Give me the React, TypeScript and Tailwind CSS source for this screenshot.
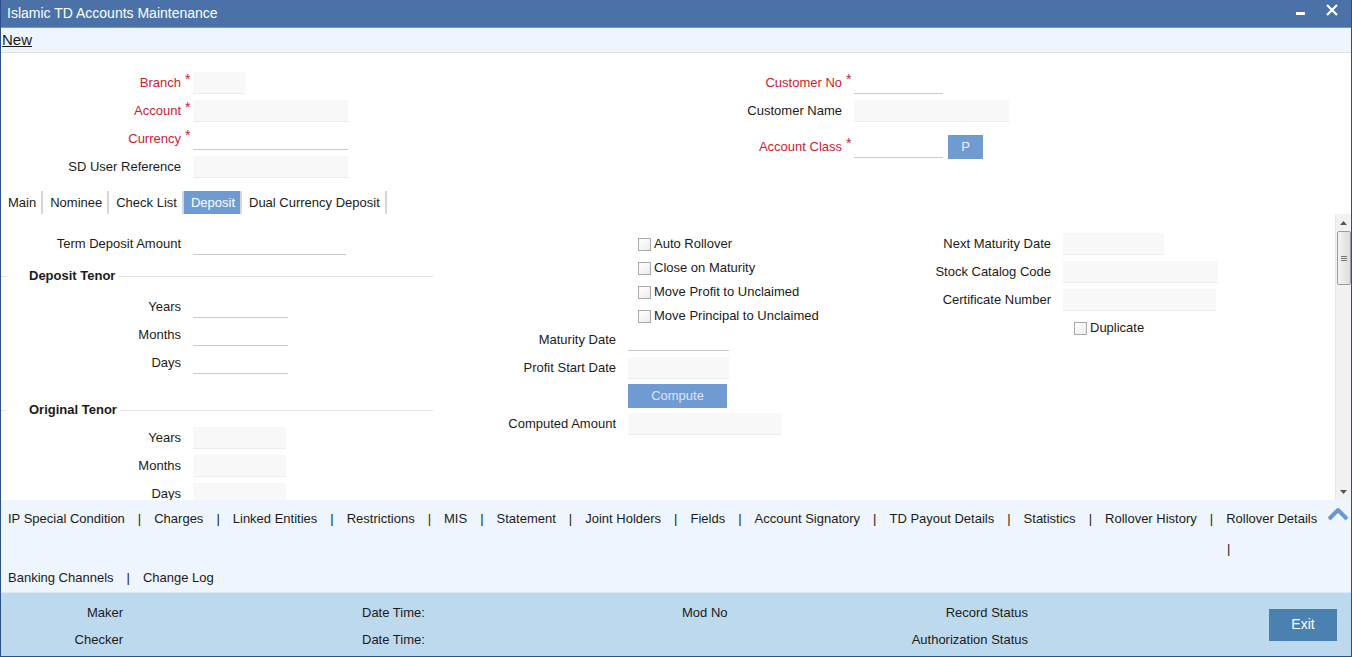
import React from 'react';

const font = { fontFamily: '"Liberation Sans", Arial, sans-serif' };

type Kind = 'fill' | 'line';

const Box: React.FC<{ w: string; kind: Kind }> = ({ w, kind }) => (
  <div
    className={`${w} h-[22px] ${
      kind === 'fill' ? 'bg-[#f8f8f8] border-b border-[#ececec]' : 'bg-white border-b border-[#c9c9c9]'
    }`}
  />
);

const Req = () => <span className="text-[#cc1a30] text-[14px] relative -top-[4px] pl-[4px]">*</span>;

const Check: React.FC<{ label: string }> = ({ label }) => (
  <>
    <span className="w-[13px] h-[13px] border border-[#a9a9a9] bg-gradient-to-br from-white to-[#ececec] shrink-0" />
    <span className="ml-[3px]">{label}</span>
  </>
);

const Legend: React.FC<{ title: string; mt: string }> = ({ title, mt }) => (
  <div className={`flex items-center h-[24px] w-[432px] ${mt}`}>
    <div className="w-[5px] h-px bg-[#e2e2e2]" />
    <span className="ml-[23px] font-bold">{title}</span>
    <div className="flex-1 h-px bg-[#e2e2e2] ml-[3px]" />
  </div>
);

const Row: React.FC<{ label: string; labelW: string; box: React.ReactNode; red?: boolean; req?: boolean }> = ({ label, labelW, box, red, req }) => (
  <div className="flex items-center h-[28px]">
    <div className={`${labelW} text-right shrink-0 ${red ? 'text-[#cc1a30]' : ''}`}>{label}</div>
    <div className="w-[12px] shrink-0 self-stretch flex items-center">{req && <Req />}</div>
    {box}
  </div>
);

const links = [
  'IP Special Condition', 'Charges', 'Linked Entities', 'Restrictions', 'MIS', 'Statement', 'Joint Holders',
  'Fields', 'Account Signatory', 'TD Payout Details', 'Statistics', 'Rollover History', 'Rollover Details',
];

const App: React.FC = () => {
  const tabs = ['Main', 'Nominee', 'Check List', 'Deposit', 'Dual Currency Deposit'];

  return (
    <div style={font} className="w-[1352px] h-[657px] flex flex-col text-[13px] text-[#1b1b1b] border-x border-b border-[#2b4f88] overflow-hidden bg-white">
      {/* Title bar */}
      <div className="h-[28px] shrink-0 bg-[#4a72a8] border-b border-[#7f98b8] flex items-center justify-between pl-[6px] pr-[13px] text-white">
        <span className="text-[14px]">Islamic TD Accounts Maintenance</span>
        <div className="flex items-start h-full pt-[4px]">
          <div className="w-[9px] h-[3px] bg-white mt-[8px]" />
          <svg width="12" height="12" viewBox="0 0 12 12" className="ml-[21px]">
            <path d="M1 1 L11 11 M11 1 L1 11" stroke="white" strokeWidth="2.2" />
          </svg>
        </div>
      </div>

      {/* Toolbar */}
      <div className="h-[25px] shrink-0 bg-[#eef5fd] border-b border-[#dde2e8] flex items-center pl-[1px]">
        <span className="text-[15px] underline">New</span>
      </div>

      {/* Header */}
      <div className="h-[137px] shrink-0 flex">
        <div className="w-[599px] pt-[16px]">
          <Row label="Branch" labelW="w-[180px]" red req box={<Box w="w-[52px]" kind="fill" />} />
          <Row label="Account" labelW="w-[180px]" red req box={<Box w="w-[155px]" kind="fill" />} />
          <Row label="Currency" labelW="w-[180px]" red req box={<Box w="w-[155px]" kind="line" />} />
          <Row label="SD User Reference" labelW="w-[180px]" box={<Box w="w-[155px]" kind="fill" />} />
        </div>
        <div className="pt-[16px]">
          <Row label="Customer No" labelW="w-[242px]" red req box={<Box w="w-[89px]" kind="line" />} />
          <Row label="Customer Name" labelW="w-[242px]" box={<Box w="w-[155px]" kind="fill" />} />
          <div className="mt-[8px]">
            <Row
              label="Account Class"
              labelW="w-[242px]"
              red
              req
              box={
                <>
                  <Box w="w-[89px]" kind="line" />
                  <button className="ml-[5px] w-[35px] h-[24px] bg-[#6f9ad2] text-[#eaf1fb] text-[13px]">P</button>
                </>
              }
            />
          </div>
        </div>
      </div>

      {/* Tabs */}
      <div className="h-[24px] shrink-0 flex pt-[1px]">
        {tabs.map((t) => (
          <div
            key={t}
            className={`h-full flex items-center pl-[7px] pr-[5px] border-r-2 border-[#d6d6d6] ${
              t === 'Deposit' ? 'bg-[#6f9bd3] text-white' : ''
            }`}
          >
            {t}
          </div>
        ))}
      </div>

      {/* Content */}
      <div className="h-[286px] shrink-0 flex">
        <div className="flex-1 flex overflow-hidden">
          {/* Left column */}
          <div className="w-[439px] shrink-0 pt-[16px]">
            <Row label="Term Deposit Amount" labelW="w-[180px]" box={<Box w="w-[153px]" kind="line" />} />
            <Legend title="Deposit Tenor" mt="mt-[6px]" />
            <div className="mt-[5px]">
              <Row label="Years" labelW="w-[180px]" box={<Box w="w-[95px]" kind="line" />} />
              <Row label="Months" labelW="w-[180px]" box={<Box w="w-[95px]" kind="line" />} />
              <Row label="Days" labelW="w-[180px]" box={<Box w="w-[95px]" kind="line" />} />
            </div>
            <Legend title="Original Tenor" mt="mt-[21px]" />
            <div className="mt-[2px]">
              <Row label="Years" labelW="w-[180px]" box={<Box w="w-[93px]" kind="fill" />} />
              <Row label="Months" labelW="w-[180px]" box={<Box w="w-[93px]" kind="fill" />} />
              <Row label="Days" labelW="w-[180px]" box={<Box w="w-[93px]" kind="fill" />} />
            </div>
          </div>

          {/* Middle column */}
          <div className="w-[420px] shrink-0 pt-[18px]">
            {['Auto Rollover', 'Close on Maturity', 'Move Profit to Unclaimed', 'Move Principal to Unclaimed'].map((c) => (
              <div key={c} className="h-[24px] flex items-center pl-[198px]">
                <Check label={c} />
              </div>
            ))}
            <div className="-mt-[2px]">
              <Row label="Maturity Date" labelW="w-[176px]" box={<Box w="w-[101px]" kind="line" />} />
              <Row label="Profit Start Date" labelW="w-[176px]" box={<Box w="w-[101px]" kind="fill" />} />
              <div className="h-[28px] flex items-center pl-[188px]">
                <button className="w-[99px] h-[24px] bg-[#6f9ad2] text-[#dce6f4] text-[13px]">Compute</button>
              </div>
              <Row label="Computed Amount" labelW="w-[176px]" box={<Box w="w-[153px]" kind="fill" />} />
            </div>
          </div>

          {/* Right column */}
          <div className="flex-1 pt-[16px]">
            <Row label="Next Maturity Date" labelW="w-[191px]" box={<Box w="w-[101px]" kind="fill" />} />
            <Row label="Stock Catalog Code" labelW="w-[191px]" box={<Box w="w-[155px]" kind="fill" />} />
            <Row label="Certificate Number" labelW="w-[191px]" box={<Box w="w-[153px]" kind="fill" />} />
            <div className="h-[28px] flex items-center pl-[214px]">
              <Check label="Duplicate" />
            </div>
          </div>
        </div>

        {/* Scrollbar */}
        <div className="w-[16px] shrink-0 bg-[#f1f1f1] border-l border-[#e6e6e6] flex flex-col items-center">
          <div className="h-[17px] flex items-center justify-center">
            <svg width="7" height="4" viewBox="0 0 7 4"><path d="M0 4 L3.5 0 L7 4 Z" fill="#555" /></svg>
          </div>
          <div className="w-[14px] h-[54px] rounded-[2px] border border-[#9c9c9c] bg-gradient-to-r from-[#f4f4f4] to-[#dcdcdc] flex flex-col items-center justify-center gap-[1px]">
            <div className="w-[6px] h-px bg-[#777]" />
            <div className="w-[6px] h-px bg-[#777]" />
            <div className="w-[6px] h-px bg-[#777]" />
          </div>
          <div className="flex-1" />
          <div className="h-[17px] flex items-center justify-center">
            <svg width="7" height="4" viewBox="0 0 7 4"><path d="M0 0 L3.5 4 L7 0 Z" fill="#555" /></svg>
          </div>
        </div>
      </div>

      {/* Links bar */}
      <div className="h-[92px] shrink-0 bg-[#eef5fd] pl-[7px]">
        <div className="h-[24px] mt-[7px] flex items-center">
          {links.map((l, i) => (
            <React.Fragment key={l}>
              {i > 0 && <span className="mx-[13px]">|</span>}
              <span>{l}</span>
            </React.Fragment>
          ))}
          <div className="ml-auto pr-[2px] -mt-[10px]">
            <svg width="22" height="14" viewBox="0 0 22 14">
              <path d="M2 12 L11 3 L20 12" stroke="#6b98d0" strokeWidth="4" fill="none" strokeLinejoin="round" />
            </svg>
          </div>
        </div>
        <div className="h-[24px] mt-[6px] flex items-center pl-[1219px]">|</div>
        <div className="h-[24px] mt-[5px] flex items-center">
          <span>Banking Channels</span>
          <span className="mx-[13px]">|</span>
          <span>Change Log</span>
        </div>
      </div>

      {/* Footer */}
      <div className="flex-1 bg-[#bdd9ee] border-t border-[#dbe9f5] flex items-center">
        <div className="flex flex-col mt-[4px]">
          <div className="h-[27px] flex items-center">
            <span className="w-[122px] text-right">Maker</span>
            <span className="ml-[239px] w-[320px]">Date Time:</span>
            <span className="w-[200px]">Mod No</span>
            <span className="w-[146px] text-right">Record Status</span>
          </div>
          <div className="h-[27px] flex items-center">
            <span className="w-[122px] text-right">Checker</span>
            <span className="ml-[239px] w-[320px]">Date Time:</span>
            <span className="w-[200px]" />
            <span className="w-[146px] text-right">Authorization Status</span>
          </div>
        </div>
        <button className="ml-[241px] w-[68px] h-[32px] bg-[#4a81b1] text-white text-[14px]">Exit</button>
      </div>
    </div>
  );
};

export default App;
